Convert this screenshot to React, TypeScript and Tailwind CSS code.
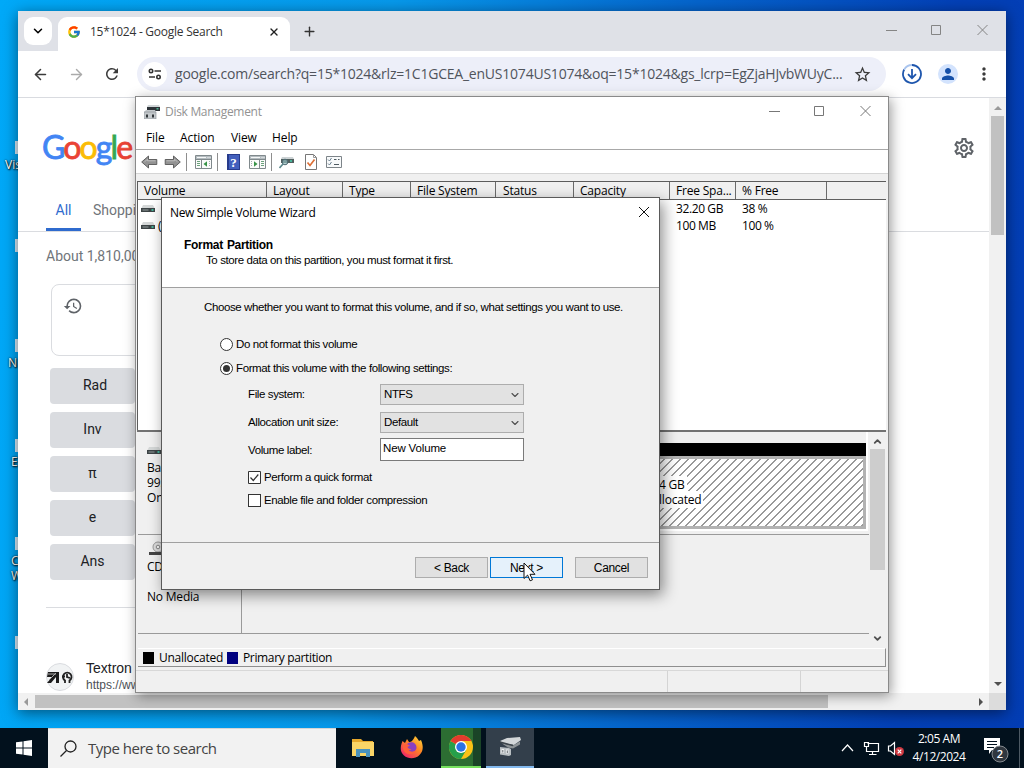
import type { ReactNode } from "react";
import {
  ArrowLeft,
  ArrowRight,
  ChevronDown,
  ChevronUp,
  Plus,
  X,
} from "lucide-react";
import { FcGoogle } from "react-icons/fc";
import {
  MdHistory,
  MdMoreVert,
  MdOutlineSettings,
  MdPerson,
  MdRefresh,
  MdStarBorder,
} from "react-icons/md";

const SEGOE = "font-['Open_Sans','Noto_Sans',sans-serif]";
const SHELL = "font-['Liberation_Sans',Arial,sans-serif]";

const COLUMNS = [
  { label: "Volume", cls: "w-[129px] pl-[6px]" },
  { label: "Layout", cls: "w-[76px] pl-[6px]" },
  { label: "Type", cls: "w-[68px] pl-[6px]" },
  { label: "File System", cls: "w-[85px] pl-[6px]" },
  { label: "Status", cls: "w-[78px] pl-[7px]" },
  { label: "Capacity", cls: "w-[96px] pl-[6px]" },
  { label: "Free Spa...", cls: "w-[66px] pl-[6px]" },
  { label: "% Free", cls: "w-[91px] pl-[6px]" },
];

const ROWS = [
  { free: "32.20 GB", percent: "38 %" },
  { free: "100 MB", percent: "100 %" },
];

const CALC_KEYS = ["Rad", "Inv", "π", "e", "Ans"];

const DESKTOP_ICONS = [
  { name: "Vis", pos: "left-[5px] top-[157px]", icon: "top-[141px]" },
  { name: "", pos: "left-[9px] top-[254px]", icon: "top-[239px]" },
  { name: "N", pos: "left-[8px] top-[355px]", icon: "top-[339px]" },
  { name: "E", pos: "left-[11px] top-[454px]", icon: "top-[439px]" },
  { name: "C", pos: "left-[11px] top-[553px]", icon: "top-[537px]" },
  { name: "W", pos: "left-[11px] top-[568px]", icon: "top-[636px]" },
];

function WindowButtons({ color }: { color: string }) {
  return (
    <svg width="106" height="12" viewBox="0 0 106 12" fill="none" stroke={color} className="block">
      <path d="M0 6.5h11M45.5 1.5h9v9h-9z" />
      <path d="M91.500 1l10 10M101.500 1l-10 10" />
    </svg>
  );
}

function DiskGlyph() {
  return (
    <svg width="14" height="8" viewBox="0 0 14 8" className="block shrink-0">
      <path d="M2 0h10l1.500 3H.5z" fill="#d5d8d8" />
      <path d="M0 3h14v4H0z" fill="#3d4446" />
      <path d="M1.500 4.500h6v1h-6z" fill="#949c9c" />
      <path d="M10.500 4h2v2h-2z" fill="#43b49b" />
    </svg>
  );
}

function DiskManagementIcon() {
  return (
    <svg width="16" height="14" viewBox="0 0 16 14" className="block">
      <path d="M4 0h11l1 2H3z" fill="#cfd4d6" />
      <path d="M3 2h13v4H3z" fill="#2d3338" />
      <path d="M12.500 3h2v1.500h-2z" fill="#4cb08f" />
      <path d="M0 7l2-2h9l1 2v7H0z" fill="#c3c8cb" />
      <path d="M0 7h12v7H0z" fill="none" stroke="#858b90" strokeWidth=".6" />
      <path d="M2 9.500h2v3H2zM8 9.500h2v3H8z" fill="#32373b" />
    </svg>
  );
}

function BackForward({ flip = false }: { flip?: boolean }) {
  return (
    <svg width="17" height="14" viewBox="0 0 17 14" className={flip ? "block -scale-x-100" : "block"}>
      <path d="M.7 7l6.800-6v3.500h8.300v5H7.500V13z" fill="#939393" stroke="#565656" strokeWidth=".9" />
      <path d="M3.500 6.800l3-2.500v1.500h8" fill="none" stroke="#bdbdbd" />
    </svg>
  );
}

function PaneIcon({ right = false }: { right?: boolean }) {
  return (
    <svg width="17" height="14" viewBox="0 0 17 14" className="block">
      <path d="M.5.5h16v13H.5z" fill="#fbfbfb" stroke="#80898c" />
      <path d="M1 1h15v3H1z" fill="#b4bcc0" />
      <path d="M2 2.500h9M12.500 2.500h1M14.500 2.500h1" stroke="#f5f7f7" />
      <path d="M.5 4.500h16" stroke="#80898c" />
      {right ? (
        <>
          <path d="M10.500 4.500v9" stroke="#80898c" />
          <path d="M2 6.500h1M2 8.500h1M2 10.500h1" stroke="#a5acae" />
          <path d="M12 6.500h3M12 8.500h3M12 10.500h3" stroke="#6ba37c" />
          <path d="M5 6.200v5.600L8.500 9z" fill="#389347" />
        </>
      ) : (
        <>
          <path d="M6.500 4.500v9" stroke="#80898c" />
          <path d="M2 6.500h3M2 8.500h3M2 10.500h3" stroke="#6ba37c" />
          <path d="M14 6.500h1M14 8.500h1M14 10.500h1" stroke="#a5acae" />
          <path d="M12 6.200v5.600L8.500 9z" fill="#389347" />
        </>
      )}
    </svg>
  );
}

function ToolbarSeparator({ className }: { className: string }) {
  return <div className={`h-[18px] w-px shrink-0 bg-[#8e8e8e] ${className}`} />;
}

function DiskToolbar() {
  return (
    <div className="flex h-[23px] items-center bg-white pl-[5px] pt-px">
      <BackForward />
      <div className="ml-[6px]"><BackForward flip /></div>
      <ToolbarSeparator className="ml-[5px]" />
      <div className="ml-[8px]"><PaneIcon /></div>
      <ToolbarSeparator className="ml-[5px]" />
      <svg width="13" height="16" viewBox="0 0 13 16" className="ml-[9px] block shrink-0">
        <path d="M0 0h13v16H0z" fill="#273b8c" />
        <path d="M2 1h10v14H2z" fill="#4360bd" />
        <text x="3.200" y="13" fontSize="13" fontWeight="700" fill="#fff" fontFamily="Liberation Serif">?</text>
      </svg>
      <div className="ml-[9px]"><PaneIcon right /></div>
      <ToolbarSeparator className="ml-[5px]" />
      <svg width="16" height="13" viewBox="0 0 16 13" className="ml-[7px] block shrink-0">
        <path d="M3 1h11l1 2H2z" fill="#cdd3d5" />
        <path d="M2 3h13v4H2z" fill="#52605f" />
        <path d="M11 4h2v2h-2z" fill="#48b59b" />
        <circle cx="6" cy="6" r="2.800" fill="#8fb9bb" fillOpacity=".7" stroke="#4e6870" />
        <path d="M4 8l-3.500 4" stroke="#5b898c" strokeWidth="1.600" />
      </svg>
      <svg width="12" height="16" viewBox="0 0 12 16" className="ml-[10px] block shrink-0">
        <path d="M.5.5h8l3 3v12H.5z" fill="#fff" stroke="#777" />
        <path d="M8.500.5v3h3" fill="none" stroke="#999" />
        <path d="M2.500 8.500l2.500 3 4.500-6" fill="none" stroke="#dd6f35" strokeWidth="1.700" />
      </svg>
      <svg width="16" height="12" viewBox="0 0 16 12" className="ml-[9px] block shrink-0">
        <path d="M.5.5h15v11H.5z" fill="#f8fafb" stroke="#7d8489" />
        <path d="M2 3.500l1.500 1.500 2-3M2 7.500l1.500 1.500 2-3" fill="none" stroke="#6b8090" />
        <path d="M8 3.500h2.500M12 3.500h1.500M8 8.500h5" stroke="#4f5b62" />
      </svg>
    </div>
  );
}

function VolumeList() {
  return (
    <div className="ml-px flex h-[249px] w-[749px] shrink-0 flex-col border-l border-t border-[#5c5c5c] bg-white">
      <div className="flex h-[18px] shrink-0 border-b border-[#5f5f5f] bg-[#f0f0f0]">
        {COLUMNS.map((c) => (
          <div
            key={c.label}
            className={`shrink-0 whitespace-nowrap border-r border-[#6b6b6b] text-[12px] leading-[18px] tracking-[-0.2px] ${c.cls}`}
          >
            {c.label}
          </div>
        ))}
      </div>
      {ROWS.map((r, i) => (
        <div key={r.free} className="mt-px flex h-[16px] shrink-0 items-center text-[12px] leading-[16px] tracking-[-0.4px]">
          <div className="flex w-[538px] items-center pl-[3px]">
            <DiskGlyph />
            {i === 1 ? <span className="ml-[3px]">(</span> : null}
          </div>
          <div className="w-[66px]">{r.free}</div>
          <div>{r.percent}</div>
        </div>
      ))}
    </div>
  );
}

function GraphicalView() {
  return (
    <div className="ml-[2px] flex h-[216px] w-[748px] shrink-0 bg-[#f0f0f0]">
      <div className="flex w-[731px] flex-col">
        <div className="flex h-[103px] border-b border-[#9a9a9a]">
          <div className="w-[103px] pl-[9px] pt-[15px] text-[12px] leading-[15px] tracking-[-0.2px]">
            <DiskGlyph />
            <div className="pt-[5px]">Bas</div>
            <div>99.</div>
            <div>On</div>
          </div>
          <div className="h-[99px] w-[627px] border-r-2 border-b-2 border-white pt-[11px]">
            <div className="h-[13px] bg-black" />
            <div className="h-[73px] border-t-[3px] border-r-[3px] border-b-[3px] border-[#b2b2b2] bg-[repeating-linear-gradient(135deg,#fff_0px,#fff_4.700px,#999_4.900px,#999_5.657px)] pl-[418px] pt-[18px] text-[12px] leading-[15px] tracking-[-0.2px]">
              <div><span className="bg-white pr-[2px]">4 GB</span></div>
              <div><span className="bg-white pr-[2px]">llocated</span></div>
            </div>
          </div>
        </div>
        <div className="flex h-[99px] border-b border-[#9a9a9a]">
          <div className="w-[104px] border-r border-[#9a9a9a] pl-[9px] pt-[6px] text-[12px] leading-[15px] tracking-[-0.2px]">
            <svg width="16" height="15" viewBox="0 0 16 15" className="ml-[2px] block">
              <circle cx="9" cy="6" r="5" fill="#ddd" stroke="#999" />
              <circle cx="9" cy="6" r="1.800" fill="#f5f5f5" stroke="#888" />
              <path d="M0 11h16v3H0z" fill="#444" />
            </svg>
            <div className="pt-[3px]">CD</div>
            <div className="pt-[15px]">No Media</div>
          </div>
        </div>
      </div>
      <div className="flex w-[16px] flex-col items-center">
        <ChevronUp size={11} strokeWidth={4} className="mt-[4px] text-[#505050]" />
        <div className="mt-[2px] h-[121px] w-[15px] bg-[#cdcdcd]" />
        <ChevronDown size={11} strokeWidth={4} className="mt-[63px] text-[#505050]" />
      </div>
    </div>
  );
}

function DiskManagement() {
  return (
    <div className={`absolute left-[135px] top-[96px] flex h-[597px] w-[754px] flex-col border border-[#8a8a8a] bg-[#f0f0f0] text-black shadow-[2px_3px_12px_rgba(0,0,0,0.4)] ${SEGOE}`}>
      <div className="flex h-[30px] shrink-0 items-center bg-white pl-[8px]">
        <DiskManagementIcon />
        <span className="ml-[5px] text-[12px] tracking-[-0.3px] text-[#929292]">Disk Management</span>
        <div className="mb-[2px] ml-auto mr-[13px]"><WindowButtons color="#777" /></div>
      </div>
      <div className="flex h-[23px] shrink-0 items-center border-b border-[#a8a8a8] bg-white pl-[10px] text-[12px] tracking-[-0.1px]">
        <span className="w-[34px]">File</span>
        <span className="w-[51px]">Action</span>
        <span className="w-[41px]">View</span>
        <span>Help</span>
      </div>
      <DiskToolbar />
      <div className="mb-[7px] h-px shrink-0 bg-[#d5d5d5]" />
      <VolumeList />
      <div className="ml-px h-[2px] w-[749px] shrink-0 bg-[#727272]" />
      <GraphicalView />
      <div className="ml-[2px] flex h-[19px] w-[748px] shrink-0 items-center border-b border-r border-t border-b-[#8e8e8e] border-r-[#8e8e8e] border-t-white pl-[5px] text-[12px] tracking-[-0.25px]">
        <div className="h-[12px] w-[11px] bg-black" />
        <span className="ml-[5px] w-[68px]">Unallocated</span>
        <div className="h-[12px] w-[11px] bg-[#00007f]" />
        <span className="ml-[5px] tracking-[-0.35px]">Primary partition</span>
      </div>
      <div className="mt-[3px] flex flex-1 border-t border-[#d8d8d8]">
        <div className="w-[532px] border-r border-[#d4d4d4]" />
        <div className="w-[133px] border-r border-[#d4d4d4]" />
      </div>
    </div>
  );
}

function Select({ value }: { value: string }) {
  return (
    <div className="flex h-[21px] w-[144px] items-center justify-between border border-[#adadad] bg-[#e2e2e2] pl-[3px] pr-[2px]">
      <span>{value}</span>
      <ChevronDown size={12} strokeWidth={2.2} className="text-[#4d4d4d]" />
    </div>
  );
}

function Button({ children, className }: { children: ReactNode; className: string }) {
  return (
    <div className={`flex h-[21px] w-[73px] items-center justify-center border text-[12px] tracking-[-0.35px] ${className}`}>
      {children}
    </div>
  );
}

function Wizard() {
  return (
    <div className={`absolute left-[161px] top-[197px] flex h-[393px] w-[499px] flex-col border border-[#5a5a5a] bg-[#f0f0f0] text-[11.5px] text-black shadow-[3px_5px_14px_rgba(0,0,0,0.45)] ${SHELL}`}>
      <div className={`flex h-[29px] shrink-0 items-center justify-between bg-white pl-[8px] pr-[9px] text-[12px] ${SEGOE}`}>
        <span className="tracking-[-0.33px]">New Simple Volume Wizard</span>
        <svg width="12" height="12" viewBox="0 0 12 12" stroke="#111" className="mb-px block">
          <path d="M1 1l10 10M11 1L1 11" />
        </svg>
      </div>
      <div className="h-[61px] shrink-0 border-b border-[#a0a0a0] bg-white pl-[22px] pt-[11px] leading-[15px]">
        <div className="text-[12px] font-bold tracking-[-0.3px] [word-spacing:1px]">Format Partition</div>
        <div className="pl-[22px] tracking-[-0.4px]">To store data on this partition, you must format it first.</div>
      </div>
      <div className="h-[255px] shrink-0 border-b border-[#a0a0a0] pl-[42px] pt-[11px] tracking-[-0.39px]">
        <div className="h-[16px] leading-[16px]">
          Choose whether you want to format this volume, and if so, what settings you want to use.
        </div>
        <div className="pl-[16px] pt-[22px]">
          <div className="flex h-[15px] items-center">
            <span className="mr-[3px] size-[13px] rounded-full border border-[#333] bg-white" />
            Do not format this volume
          </div>
          <div className="mt-[9px] flex h-[15px] items-center">
            <span className="mr-[3px] flex size-[13px] items-center justify-center rounded-full border border-[#333] bg-white">
              <span className="size-[7px] rounded-full bg-[#333]" />
            </span>
            Format this volume with the following settings:
          </div>
        </div>
        <div className="grid grid-cols-[132px_144px] pl-[44px] pt-[8px]">
          <span className="h-[28px] leading-[20px]">File system:</span>
          <Select value="NTFS" />
          <span className="h-[26px] leading-[20px]">Allocation unit size:</span>
          <Select value="Default" />
          <span className="leading-[24px]">Volume label:</span>
          <div className="h-[23px] border border-[#7a7a7a] bg-white pl-[2px] leading-[19px] tracking-[-0.15px]">New Volume</div>
        </div>
        <div className="pl-[44px] pt-[9px]">
          <div className="flex h-[13px] items-center">
            <svg width="13" height="13" viewBox="0 0 13 13" fill="none" stroke="#333" className="mr-[3px] block">
              <path d="M.5.5h12v12H.5z" fill="#fff" />
              <path d="M2.500 6.500l2.800 3 5-6" strokeWidth="1.200" />
            </svg>
            Perform a quick format
          </div>
          <div className="mt-[10px] flex h-[13px] items-center">
            <span className="mr-[3px] size-[13px] border border-[#333] bg-white" />
            Enable file and folder compression
          </div>
        </div>
      </div>
      <div className="flex pl-[253px] pt-[14px]">
        <Button className="border-[#adadad] bg-[#e1e1e1]">&lt; Back</Button>
        <Button className="ml-[2px] border-[#0078d7] bg-[#e5f1fb]">Next &gt;</Button>
        <Button className="ml-[12px] border-[#adadad] bg-[#e1e1e1]">Cancel</Button>
      </div>
    </div>
  );
}

function BrowserChrome() {
  return (
    <div className={SEGOE}>
      <div className="flex h-[40px] items-end bg-[#dfe1e7]">
        <div className="mb-[6px] ml-[6px] flex size-[28px] items-center justify-center rounded-[9px] bg-white">
          <ChevronDown size={14} strokeWidth={2.6} />
        </div>
        <div className="ml-[6px] flex h-[34px] w-[232px] items-center rounded-t-[9px] bg-white pb-[4px] pl-[9px] pr-[10px]">
          <FcGoogle size={14} />
          <span className="ml-[9px] text-[12px] tracking-[-0.25px] text-[#333]">15*1024 - Google Search</span>
          <X size={12} strokeWidth={2.8} className="ml-auto text-[#222]" />
        </div>
        <Plus size={15} strokeWidth={2.2} className="mb-[12px] ml-[12px] text-[#333]" />
        <div className="mb-[15px] ml-auto mr-[14px]"><WindowButtons color="#858585" /></div>
      </div>
      <div className="flex h-[46px] items-center rounded-t-[8px] bg-white pl-[14px]">
        <ArrowLeft size={17} strokeWidth={2.2} className="text-[#3b3b3b]" />
        <ArrowRight size={17} strokeWidth={2} className="ml-[19px] text-[#aaa]" />
        <MdRefresh size={18} className="ml-[18px] text-[#3b3b3b]" />
        <div className="ml-[16px] flex h-[34px] w-[749px] items-center rounded-full bg-[#edeff9] pl-[5px]">
          <div className="flex size-[25px] items-center justify-center rounded-full bg-white">
            <svg width="14" height="12" viewBox="0 0 14 12" fill="none" stroke="#333" strokeWidth="1.600" className="block">
              <circle cx="3" cy="3" r="1.700" />
              <path d="M6.500 3H13M1 9h6" />
              <circle cx="10.500" cy="9" r="1.700" />
            </svg>
          </div>
          <span className="mb-px ml-[8px] whitespace-nowrap text-[14px] tracking-[-0.22px] text-[#50545c]">
            google.com/search?q=15*1024&amp;rlz=1C1GCEA_enUS1074US1074&amp;oq=15*1024&amp;gs_lcrp=EgZjaHJvbWUyC...
          </span>
          <MdStarBorder size={19} className="ml-auto mr-[14px] shrink-0 text-[#3b3b3b]" />
        </div>
        <svg width="20" height="20" viewBox="0 0 20 20" fill="none" stroke="#1e56ad" strokeWidth="1.800" className="ml-[16px] block">
          <path d="M10 1a9 9 0 1 1-7.800 4.500" />
          <path d="M2.200 5.500A9 9 0 0 1 10 1" stroke="#a9c4ee" />
          <path d="M10 5v9M6 10.200l4 4 4-4" />
        </svg>
        <div className="ml-[16px] flex size-[20px] items-center justify-center rounded-full bg-[#d3e3fd]">
          <MdPerson size={18} className="text-[#1550a8]" />
        </div>
        <MdMoreVert size={20} className="ml-[16px] text-[#3b3b3b]" />
      </div>
    </div>
  );
}

function SearchPage() {
  return (
    <div className="h-[595px] w-[971px] overflow-hidden bg-white font-['Roboto',Arial,sans-serif]">
      <div className="flex h-[98px] items-center pl-[24px] pr-[13px] pt-px">
        <div className="mb-px font-['Lato',sans-serif] text-[32px] leading-[32px] tracking-[-1.9px] [-webkit-text-stroke:0.8px]">
          <span className="text-[#4285f4]">G</span>
          <span className="text-[#ea4335]">o</span>
          <span className="text-[#fbbc05]">o</span>
          <span className="text-[#4285f4]">g</span>
          <span className="text-[#34a853]">l</span>
          <span className="text-[#ea4335]">e</span>
        </div>
        <MdOutlineSettings size={24} className="ml-auto text-[#5f6368]" />
      </div>
      <div className="flex h-[36px] border-b border-[#dadce0] pl-[28px] text-[14px] leading-[28px]">
        <div className="h-[35px] w-[35px] border-b-[3px] border-[#2f6bce] text-center text-[#2f6bce]">All</div>
        <div className="ml-[12px] text-[#70757a]">Shopping</div>
      </div>
      <div className="h-[52px] pl-[28px] pt-[16px] text-[14px] leading-[16px] text-[#70757a]">About 1,810,000</div>
      <div className="ml-[33px] h-[72px] w-[200px] rounded-[8px] border border-[#dadce0] pl-[11px] pt-[11px]">
        <MdHistory size={20} className="text-[#5f6368]" />
      </div>
      <div className="ml-[32px] mt-[12px] flex w-[85px] flex-col gap-[8px]">
        {CALC_KEYS.map((k) => (
          <div
            key={k}
            className={`h-[36px] rounded-[4px] bg-[#dadce0] text-center text-[14px] leading-[35px] text-[#202124] ${k === "Rad" ? "pl-[5px]" : ""}`}
          >
            {k}
          </div>
        ))}
      </div>
      <div className="ml-[28px] mt-[27px] h-px w-[200px] bg-[#dadce0]" />
      <div className="flex pl-[28px] pt-[51px] font-['Liberation_Sans',Arial,sans-serif]">
        <div className="mt-[4px] flex size-[28px] items-center justify-center rounded-full border border-[#dadce0] bg-[#f1f3f4]">
          <svg width="26" height="13" viewBox="0 0 26 13" className="block">
            <path d="M1 1h11v11H9V6L4 12H0l5-6H0z" fill="#1c1c1c" />
            <path d="M1 3h8M2 9l7-7" stroke="#aaa" />
            <path d="M18 12v-2.500a4.300 4.300 0 1 1 4.500 0V12M15 5.500h3M20 3v3l3 1" fill="none" stroke="#222" strokeWidth="1.800" />
          </svg>
        </div>
        <div className="ml-[12px]">
          <div className="text-[14px] leading-[18px] text-[#202124]">Textron</div>
          <div className="text-[12px] leading-[17px] text-[#4d5156]">https://www</div>
        </div>
      </div>
    </div>
  );
}

function Browser() {
  return (
    <div className="absolute left-[18px] top-[11px] flex h-[699px] w-[988px] flex-col overflow-hidden bg-white shadow-[0_3px_14px_rgba(0,0,0,0.5)]">
      <BrowserChrome />
      <div className="h-px w-full bg-[#d9dbe0]" />
      <div className="flex">
        <SearchPage />
        <div className="flex w-[17px] flex-col items-center bg-[#f1f1f1]">
          <div className="mt-[8px] border-x-[4px] border-b-[4px] border-x-transparent border-b-[#999]" />
          <div className="mt-[6px] h-[119px] w-[13px] bg-[#c1c1c1]" />
          <div className="mb-[7px] mt-auto border-x-[4px] border-t-[4px] border-x-transparent border-t-[#505050]" />
        </div>
      </div>
      <div className="flex h-[17px] items-center bg-[#f1f1f1]">
        <div className="ml-[6px] border-y-[4px] border-r-[4px] border-y-transparent border-r-[#999]" />
        <div className="ml-[7px] h-[13px] w-[793px] bg-[#c1c1c1]" />
        <div className="ml-auto border-y-[4px] border-l-[4px] border-y-transparent border-l-[#505050]" />
        <div className="ml-[6px] h-full w-[17px] bg-[#dcdcdc]" />
      </div>
    </div>
  );
}

function FolderIcon() {
  return (
    <svg width="22" height="20" viewBox="0 0 22 20" className="block">
      <path d="M0 1h9l2 2h10v15H0z" fill="#e7a92c" />
      <path d="M0 4h22v14H0z" fill="#fad567" />
      <path d="M4 11h14v8h-4v-4H8v4H4z" fill="#4a92bd" />
    </svg>
  );
}

function FirefoxIcon() {
  return (
    <svg width="24" height="24" viewBox="0 0 24 24" className="block">
      <defs>
        <linearGradient id="ff" x1="1" y1="0" x2="0.200" y2="1">
          <stop offset="0" stopColor="#ffe23f" />
          <stop offset=".45" stopColor="#ff8a22" />
          <stop offset="1" stopColor="#f0226b" />
        </linearGradient>
      </defs>
      <path d="M15 0c2 2 3 3 4 5l2-1c3 7 2 12-2 15.500-4 3.500-11 3.500-15 0S0 11 2.500 5L5 7l2-4 2 3c2 0 4-1 6-6z" fill="url(#ff)" />
      <path d="M8 7c4-2 8.500 0 8.500 4.500 0 4-5 6-8 3l3-1c-4-1-6-4-3.500-6.500z" fill="#8a3fc0" />
      <path d="M3 9c3-1 5-1 7 1-2 0-3 1-3 2 2 4 6 5 9 2-1 5-9 6-12 1-1-2-2-4-1-6z" fill="#ff5f3b" />
    </svg>
  );
}

function ChromeIcon() {
  return (
    <svg width="24" height="24" viewBox="0 0 24 24" className="block">
      <circle cx="12" cy="12" r="12" fill="#fbc116" />
      <path d="M12 12L1.600 6A12 12 0 0 0 12 24l5.200-9z" fill="#269f4a" />
      <path d="M12 12L1.600 6A12 12 0 0 1 22.400 6H12z" fill="#e33b2e" />
      <circle cx="12" cy="12" r="6" fill="#fff" />
      <circle cx="12" cy="12" r="4.700" fill="#2b72e3" />
    </svg>
  );
}

function DriveIcon() {
  return (
    <svg width="22" height="20" viewBox="0 0 22 20" className="block">
      <path d="M1 4l7-3 13-1 1 3-7 5L3 6z" fill="#d3d7d9" />
      <path d="M3 6.500l11 2 7-4v3l-7 4-5-1z" fill="#8d9396" />
      <path d="M1 5l13 3.500" stroke="#3c444a" strokeWidth="1.500" />
      <path d="M1 10l9 1 2 1v6l-2 1-9-1.500z" fill="#b9bfc2" />
      <path d="M2.500 12h2.500v4H2.500zM7 12.500h2.500v4H7z" fill="#eef0f1" />
      <path d="M3.800 13v2.500M8.300 13.500V16" stroke="#656c70" />
    </svg>
  );
}

function Taskbar() {
  return (
    <div className={`absolute bottom-0 left-0 flex h-[40px] w-full items-center bg-[#02111d] text-white ${SEGOE}`}>
      <div className="flex w-[48px] justify-center">
        <svg width="16" height="16" viewBox="0 0 16 16" fill="#fff" className="block">
          <path d="M0 2.300l6.500-.9v6.100H0zM7.500 1.200L16 0v7.500H7.500zM0 8.500h6.500v6.100L0 13.700zM7.500 8.500H16V16l-8.500-1.200z" />
        </svg>
      </div>
      <div className="flex h-full w-[288px] items-center border-t border-[#d5d5d5] bg-[#f2f2f2] pl-[12px]">
        <svg width="17" height="17" viewBox="0 0 17 17" fill="none" stroke="#222" strokeWidth="1.300" className="block">
          <circle cx="10.500" cy="6.500" r="5.500" />
          <path d="M6.500 10.500L.5 16.500" />
        </svg>
        <span className="ml-[11px] text-[15px] tracking-[-0.5px] text-[#444]">Type here to search</span>
      </div>
      <div className="ml-[16px]"><FolderIcon /></div>
      <div className="ml-[26px]"><FirefoxIcon /></div>
      <div className="ml-[17px] flex h-full w-[40px] items-center justify-center border-b-2 border-[#76e15e] bg-[linear-gradient(90deg,#2c6d32_0_32px,#1a4427_32px)]">
        <ChromeIcon />
      </div>
      <div className="ml-[5px] flex h-full w-[48px] items-center justify-center border-b-2 border-[#83b9ee] bg-[#333f4b]">
        <DriveIcon />
      </div>
      <svg width="64" height="18" viewBox="0 0 64 18" fill="none" stroke="#fff" strokeWidth="1.200" className="ml-auto block shrink-0">
        <path d="M1 12l5.500-6L12 12" />
        <path d="M26.500 4.500h11v8h-12V9M23.500 3.500h4v4h-4zM25.500 7.500V9M31.500 12.500v3M28 15.500h7.500" />
        <path d="M47.500 7v5h2l4 3.500v-12L49.500 7z" />
        <circle cx="58.500" cy="12.500" r="4.500" fill="#cf3941" stroke="none" />
        <path d="M56.700 10.700l3.600 3.600M60.300 10.700l-3.600 3.600" />
      </svg>
      <div className="ml-[2px] w-[64px] pb-px text-center text-[12px] leading-[18px] tracking-[-0.45px]">
        <div>2:05 AM</div>
        <div>4/12/2024</div>
      </div>
      <div className="ml-[12px] mr-[10px] w-[26px] pt-[3px]">
        <svg width="26" height="28" viewBox="0 0 26 28" className="block">
          <path d="M1 2h16v12H9l-3 4v-4H1z" fill="#fff" />
          <path d="M4 5.500h10M4 8.500h10M4 11.500h7" stroke="#02111d" />
          <circle cx="17" cy="18" r="8" fill="#30373f" stroke="#858a8f" />
          <text x="17" y="22" textAnchor="middle" fontSize="11" fontWeight="600" fill="#fff" fontFamily="Open Sans">2</text>
        </svg>
      </div>
      <div className="h-full w-px bg-[#4d5963]" />
      <div className="w-[4px] shrink-0" />
    </div>
  );
}

export default function App() {
  return (
    <div className="relative h-[768px] w-[1024px] overflow-hidden bg-[linear-gradient(95deg,#00a9f8_0%,#0799eb_36%,#0564cd_64%,#0340b7_88%,#033db4_100%)]">
      {DESKTOP_ICONS.map((d) => (
        <div key={d.icon}>
          <div className={`absolute left-[15px] h-[13px] w-[4px] bg-[#dceefa] ${d.icon}`} />
          <div className={`absolute text-[12px] leading-[16px] text-white [text-shadow:1px_1px_2px_#000,0_0_2px_#000] ${SEGOE} ${d.pos}`}>
            {d.name}
          </div>
        </div>
      ))}
      <Browser />
      <DiskManagement />
      <Wizard />
      <Taskbar />
      <svg width="13" height="20" viewBox="0 0 13 20" className="absolute left-[523px] top-[562px] z-10">
        <path d="M1 1v15.500l3.600-3.400 2.500 5.700 2.400-1-2.500-5.500h5z" fill="#fff" stroke="#111" />
      </svg>
    </div>
  );
}
